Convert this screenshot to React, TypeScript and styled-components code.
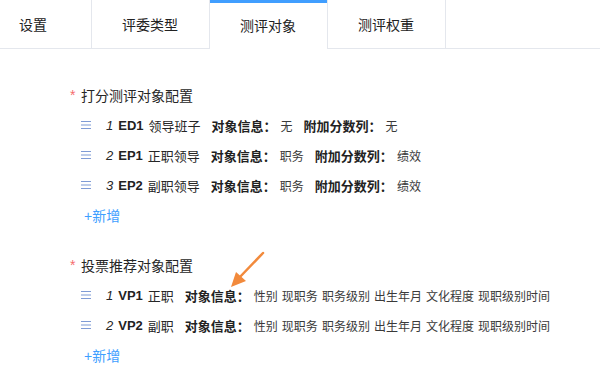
import React from 'react';
import styled, { createGlobalStyle } from 'styled-components';

const GlobalStyle = createGlobalStyle`
  body {
    margin: 0;
    background: #fff;
    font-family: "Liberation Sans", "Noto Sans CJK SC", sans-serif;
    color: #262626;
  }
`;

const Page = styled.div`
  position: relative;
  width: 600px;
  height: 390px;
  overflow: hidden;
`;

const TabBar = styled.div`
  display: flex;
  height: 49px;
  border-bottom: 1px solid #e4e7ed;
  box-sizing: border-box;
`;

const Tab = styled.div<{ $active?: boolean; $first?: boolean }>`
  box-sizing: border-box;
  height: ${p => (p.$active ? '49px' : '48px')};
  display: flex;
  align-items: center;
  padding: ${p => (p.$first ? '0 44px 0 19px' : '0 31px 0 30px')};
  font-size: 14px;
  color: #222;
  border-right: 1px solid #e4e7ed;
  background: #fff;
  box-shadow: ${p => (p.$active ? 'inset 0 3px 0 #409eff' : 'none')};
`;

const Content = styled.div`
  padding: 31px 0 0 70px;
`;

const Section = styled.div`
  & + & {
    margin-top: 21px;
  }
`;

const SectionTitle = styled.div`
  display: flex;
  align-items: center;
  height: 30px;
  font-size: 14px;
  color: #262626;
`;

const Star = styled.span`
  color: #f56c6c;
  margin-right: 4px;
  width: 7px;
`;

const Row = styled.div`
  display: flex;
  align-items: center;
  height: 30px;
  padding-left: 11px;
  white-space: nowrap;
`;

const DragIcon = styled.svg`
  width: 10px;
  height: 10px;
  margin-right: 15px;
  flex-shrink: 0;
`;

const Index = styled.span`
  font-style: italic;
  font-size: 13px;
  color: #262626;
  margin-right: 5px;
`;

const Code = styled.span`
  font-weight: bold;
  font-size: 13px;
  color: #222;
`;

const Name = styled.span`
  font-size: 13px;
  color: #262626;
  margin-left: 5px;
`;

const FieldLabel = styled.span`
  font-weight: bold;
  font-size: 13px;
  color: #222;
  margin-left: 11px;
`;

const FieldValue = styled.span`
  display: flex;
  gap: 4px;
  font-size: 12px;
  color: #3a3a3a;
  margin-left: 4px;
`;

const AddLink = styled.div`
  height: 29px;
  display: flex;
  align-items: center;
  padding-left: 14px;
  font-size: 14px;
  color: #409eff;
  cursor: pointer;
`;

const Arrow = styled.svg`
  position: absolute;
  left: 226px;
  top: 250px;
  width: 42px;
  height: 42px;
`;

type Item = { code: string; name: string; fields: { label: string; values: string[] }[] };

const scoreItems: Item[] = [
  { code: 'ED1', name: '领导班子', fields: [{ label: '对象信息：', values: ['无'] }, { label: '附加分数列：', values: ['无'] }] },
  { code: 'EP1', name: '正职领导', fields: [{ label: '对象信息：', values: ['职务'] }, { label: '附加分数列：', values: ['绩效'] }] },
  { code: 'EP2', name: '副职领导', fields: [{ label: '对象信息：', values: ['职务'] }, { label: '附加分数列：', values: ['绩效'] }] },
];

const info = ['性别', '现职务', '职务级别', '出生年月', '文化程度', '现职级别时间'];

const voteItems: Item[] = [
  { code: 'VP1', name: '正职', fields: [{ label: '对象信息：', values: info }] },
  { code: 'VP2', name: '副职', fields: [{ label: '对象信息：', values: info }] },
];

const Handle = () => (
  <DragIcon viewBox="0 0 10 10">
    <rect x="0" y="1" width="10" height="1" fill="#7f9bd6" />
    <rect x="0" y="4.5" width="10" height="1" fill="#7f9bd6" />
    <rect x="0" y="8" width="10" height="1" fill="#7f9bd6" />
  </DragIcon>
);

const ItemList = ({ title, items }: { title: string; items: Item[] }) => (
  <Section>
    <SectionTitle>
      <Star>*</Star>
      {title}
    </SectionTitle>
    {items.map((item, i) => (
      <Row key={item.code}>
        <Handle />
        <Index>{i + 1}</Index>
        <Code>{item.code}</Code>
        <Name>{item.name}</Name>
        {item.fields.map(f => (
          <React.Fragment key={f.label}>
            <FieldLabel>{f.label}</FieldLabel>
            <FieldValue>
              {f.values.map(v => (
                <span key={v}>{v}</span>
              ))}
            </FieldValue>
          </React.Fragment>
        ))}
      </Row>
    ))}
    <AddLink>+新增</AddLink>
  </Section>
);

const tabs = ['设置', '评委类型', '测评对象', '测评权重'];

const App: React.FC = () => (
  <Page>
    <GlobalStyle />
    <TabBar>
      {tabs.map((t, i) => (
        <Tab key={t} $first={i === 0} $active={i === 2}>
          {t}
        </Tab>
      ))}
    </TabBar>
    <Content>
      <ItemList title="打分测评对象配置" items={scoreItems} />
      <ItemList title="投票推荐对象配置" items={voteItems} />
    </Content>
    <Arrow viewBox="0 0 42 42">
      <line x1="37" y1="3" x2="12" y2="29" stroke="#f28a3c" strokeWidth="2.5" strokeLinecap="round" />
      <polygon points="5,37 10,22 20,31" fill="#f28a3c" />
    </Arrow>
  </Page>
);

export default App;
